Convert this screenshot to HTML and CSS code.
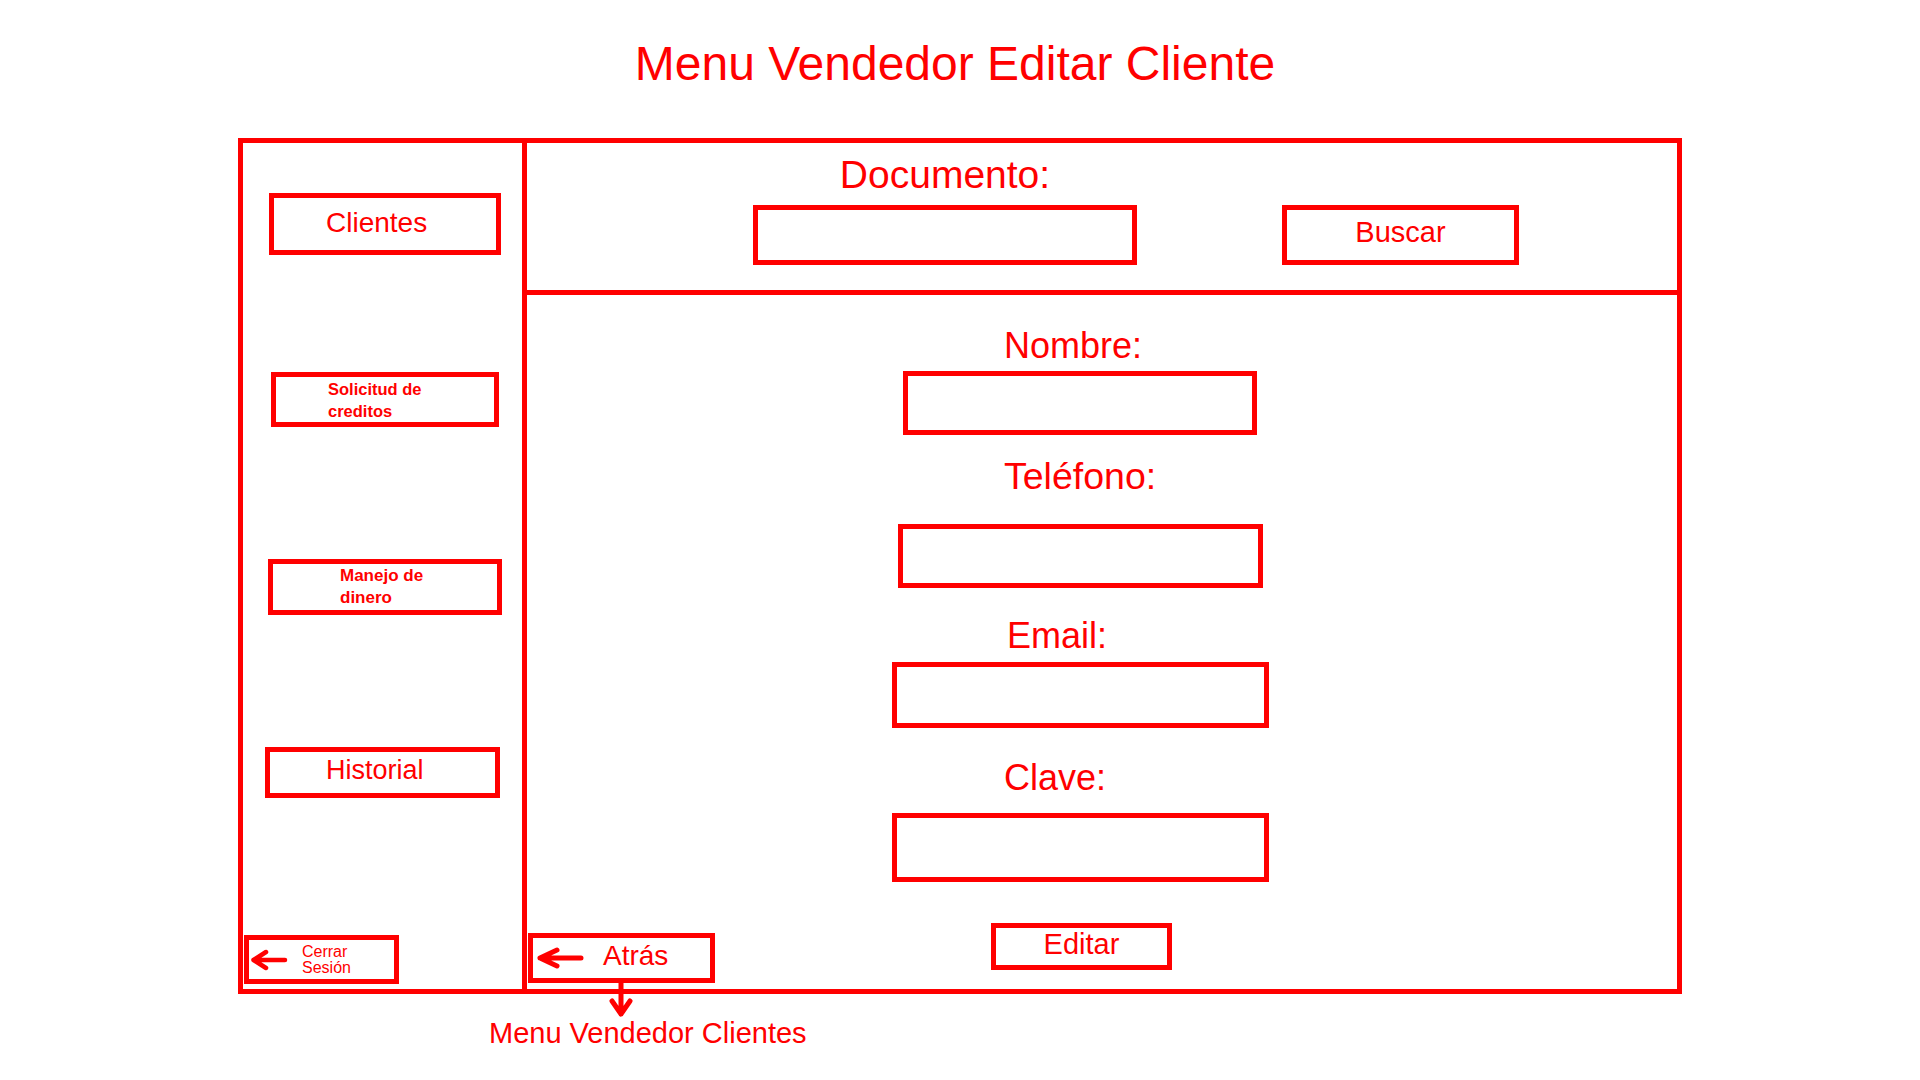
FILE: index.html
```html
<!DOCTYPE html>
<html lang="es">
<head>
<meta charset="utf-8">
<title>Menu Vendedor Editar Cliente</title>
<link rel="stylesheet" href="styles.css">
</head>
<body>
<div class="page">
  <h1 class="title">Menu Vendedor Editar Cliente</h1>
  <div class="frame">
    <aside class="sidebar">
      <div class="nav nav-clientes"><span class="nav-big">Clientes</span></div>
      <div class="nav nav-solicitud"><span class="nav-small">Solicitud de<br>creditos</span></div>
      <div class="nav nav-manejo"><span class="nav-small">Manejo de<br>dinero</span></div>
      <div class="nav nav-historial"><span class="nav-big">Historial</span></div>
      <div class="nav nav-cerrar">
        <svg class="arrow-cerrar" viewBox="0 0 38 22" width="38" height="22"><path d="M35 11 L3.5 11 M16 3 L3.5 11 L16 19"/></svg>
        <span class="nav-tiny">Cerrar<br>Sesión</span>
      </div>
    </aside>
    <main class="main">
      <header class="search">
        <div class="search-field">
          <div class="search-label">Documento:</div>
          <div class="box box-doc"></div>
        </div>
        <div class="btn btn-buscar">Buscar</div>
      </header>
      <section class="form">
        <div class="fields">
          <div class="label label-nombre">Nombre:</div>
          <div class="box box-nombre"></div>
          <div class="label label-tel">Teléfono:</div>
          <div class="box box-tel"></div>
          <div class="label label-email">Email:</div>
          <div class="box box-email"></div>
          <div class="label label-clave">Clave:</div>
          <div class="box box-clave"></div>
        </div>
        <div class="actions">
          <div class="btn btn-atras">
            <svg class="arrow-atras" viewBox="0 0 48 22" width="48" height="22"><path d="M45 11 L4 11 M21 3 L4 11 L21 19"/></svg>
            <span class="atras-text">Atrás</span>
            <svg class="arrow-down" viewBox="0 0 24 36" width="24" height="36"><path d="M12 0 L12 31 M3 18 L12 31 L21 18"/></svg>
          </div>
          <div class="btn btn-editar">Editar</div>
        </div>
      </section>
    </main>
  </div>
  <div class="caption">Menu Vendedor Clientes</div>
</div>
</body>
</html>
```

FILE: styles.css
```css
* { box-sizing: border-box; }

html, body {
  margin: 0;
  padding: 0;
  background: #ffffff;
}

body {
  font-family: "Liberation Sans", Arial, sans-serif;
  color: #ff0000;
}

.page {
  width: 1920px;
  height: 1080px;
}

.title {
  margin: 0;
  padding: 36px 10px 0 0;
  height: 138px;
  font-size: 48px;
  font-weight: normal;
  line-height: 56px;
  text-align: center;
}

.frame {
  width: 1444px;
  height: 856px;
  margin: 0 auto;
  border: 5px solid #ff0000;
  display: flex;
}

/* ---------- sidebar ---------- */
.sidebar {
  width: 284px;
  flex: none;
  border-right: 5px solid #ff0000;
  display: flex;
  flex-direction: column;
  align-items: flex-start;
}

.nav {
  border: 5px solid #ff0000;
  display: flex;
  align-items: center;
}

.nav-big {
  font-size: 28px;
  line-height: 32px;
}

.nav-small {
  font-size: 16.5px;
  font-weight: bold;
  line-height: 22px;
}

.nav-manejo .nav-small { font-size: 17px; }

.nav-tiny {
  font-size: 16px;
  line-height: 16px;
}

.nav-clientes {
  margin: 50px 0 0 26px;
  width: 232px;
  height: 62px;
  padding: 0 0 3px 52px;
}

.nav-solicitud {
  margin: 117px 0 0 28px;
  width: 228px;
  height: 55px;
  padding-left: 52px;
}

.nav-manejo {
  margin: 132px 0 0 25px;
  width: 234px;
  height: 56px;
  padding-left: 67px;
}

.nav-historial {
  margin: 132px 0 0 22px;
  width: 235px;
  height: 51px;
  padding: 0 0 6px 56px;
}

.nav-historial .nav-big { font-size: 27px; }

.nav-cerrar {
  margin: 137px 0 0 1px;
  width: 155px;
  height: 49px;
  padding-left: 1px;
}

.arrow-cerrar {
  flex: none;
  margin-right: 14px;
}

svg path {
  fill: none;
  stroke: #ff0000;
  stroke-linecap: round;
  stroke-linejoin: round;
}

.arrow-cerrar path { stroke-width: 4.5; }

/* ---------- main ---------- */
.main {
  flex: 1;
  display: flex;
  flex-direction: column;
}

.search {
  height: 152px;
  flex: none;
  border-bottom: 5px solid #ff0000;
  padding: 10px 0 0 226px;
  display: flex;
  align-items: flex-start;
}

.search-field {
  display: flex;
  flex-direction: column;
  align-items: center;
}

.search-label {
  font-size: 39px;
  line-height: 44px;
  margin-bottom: 8px;
}

.box {
  border: 5px solid #ff0000;
}

.box-doc { width: 384px; height: 60px; }

.btn {
  border: 5px solid #ff0000;
  display: flex;
  align-items: center;
  justify-content: center;
}

.btn-buscar {
  margin: 52px 0 0 145px;
  width: 237px;
  height: 60px;
  font-size: 29px;
  line-height: 32px;
  padding-bottom: 6px;
}

.form {
  flex: 1;
  display: flex;
  flex-direction: column;
}

.fields {
  margin-left: 364px;
  width: 378px;
  padding-top: 30px;
  display: flex;
  flex-direction: column;
  align-items: center;
}

.label {
  align-self: flex-start;
  margin-left: 113px;
  font-size: 36px;
  line-height: 41px;
}

.box-nombre { margin-top: 5px; width: 354px; height: 64px; }
.label-tel { margin-top: 21px; font-size: 37.5px; }
.box-tel { margin-top: 27px; width: 365px; height: 64px; }
.label-email { margin-top: 27px; margin-left: 116px; }
.box-email { margin-top: 6px; width: 377px; height: 66px; }
.label-clave { margin-top: 29px; }
.box-clave { margin-top: 15px; width: 377px; height: 69px; }

.actions {
  margin-top: 41px;
  display: flex;
  align-items: flex-start;
}

.btn-atras {
  position: relative;
  margin: 10px 0 0 1px;
  width: 187px;
  height: 50px;
  justify-content: flex-start;
  padding: 0 0 0 3px;
  font-size: 28px;
  line-height: 32px;
}

.atras-text {
  margin-bottom: 4px;
}

.arrow-atras {
  flex: none;
  margin-right: 19px;
}

.arrow-atras path,
.arrow-down path { stroke-width: 5; }

.arrow-down {
  position: absolute;
  left: 76px;
  top: 45px;
}

.btn-editar {
  margin-left: 276px;
  width: 181px;
  height: 47px;
  font-size: 29px;
  line-height: 32px;
  padding-bottom: 5px;
}

.caption {
  margin-top: 23px;
  padding-left: 489px;
  font-size: 29px;
  line-height: 32px;
}
```
